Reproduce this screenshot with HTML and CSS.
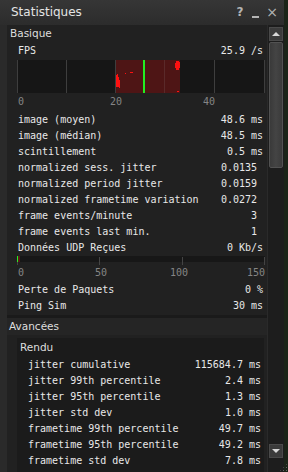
FILE: index.html
```html
<!DOCTYPE html>
<html>
<head>
<meta charset="utf-8">
<link rel="stylesheet" href="styles.css">
</head>
<body>
<div class="window">
  <div class="titlebar">
    <span class="title">Statistiques</span>
    <div class="ctrls">
      <span class="ctrl q">?</span>
      <span class="ctrl min"></span>
      <span class="ctrl close">×</span>
    </div>
  </div>
  <div class="main">
    <div class="content">
      <div class="section basic">
        <div class="sec-head">Basique</div>
        <div class="rows">
          <div class="row first"><span>FPS</span><span>25.9 /s</span></div>
        </div>
        <div class="graph">
          <svg width="248" height="33" viewBox="0 0 248 33">
            <rect x="0" y="0" width="248" height="33" fill="#161616"/>
            <rect x="98" y="0" width="65" height="33" fill="#4e1515"/>
            <g fill="#3e3e3e">
              <rect x="0" y="0" width="1" height="33"/>
              <rect x="49" y="0" width="1" height="33"/>
              <rect x="98" y="0" width="1" height="33"/>
              <rect x="147" y="0" width="1" height="33" fill="#5a2a2a"/>
              <rect x="197" y="0" width="1" height="33"/>
              <rect x="247" y="0" width="1" height="33"/>
            </g>
            <g fill="#ff1010">
              <rect x="99" y="15" width="2" height="12"/>
              <rect x="101" y="17" width="1" height="10"/>
              <rect x="102" y="20" width="1" height="8"/>
              <rect x="100" y="14" width="1" height="2"/>
              <rect x="108" y="13" width="1" height="1"/>
              <rect x="113" y="12" width="3" height="1"/>
              <rect x="159" y="1" width="3" height="9"/>
              <rect x="158" y="3" width="1" height="5"/>
              <rect x="162" y="2" width="1" height="6"/>
              <rect x="160" y="31" width="2" height="1"/>
            </g>
            <rect x="126" y="0" width="2" height="33" fill="#22ee22"/>
          </svg>
        </div>
        <div class="axis axis-fps">
          <span class="lbl" style="left:1px">0</span>
          <span class="lbl" style="left:93px">20</span>
          <span class="lbl" style="left:186px">40</span>
        </div>
        <div class="rows">
          <div class="row first"><span>image (moyen)</span><span>48.6 ms</span></div>
          <div class="row"><span>image (médian)</span><span>48.5 ms</span></div>
          <div class="row"><span>scintillement</span><span>0.5 ms</span></div>
          <div class="row"><span>normalized sess. jitter</span><span class="nu">0.0135</span></div>
          <div class="row"><span>normalized period jitter</span><span class="nu">0.0159</span></div>
          <div class="row"><span>normalized frametime variation</span><span class="nu">0.0272</span></div>
          <div class="row"><span>frame events/minute</span><span class="nu">3</span></div>
          <div class="row"><span>frame events last min.</span><span class="nu">1</span></div>
          <div class="row"><span>Données UDP Reçues</span><span>0 Kb/s</span></div>
        </div>
        <div class="bar">
          <svg width="248" height="9" viewBox="0 0 248 9">
            <rect x="0" y="0" width="248" height="6" fill="#171717"/>
            <g fill="#444">
              <rect x="0" y="1" width="1" height="8"/>
              <rect x="82" y="1" width="1" height="8"/>
              <rect x="165" y="1" width="1" height="8"/>
              <rect x="247" y="1" width="1" height="8"/>
            </g>
            <rect x="1" y="0" width="2" height="6" fill="#5a1818"/>
            <rect x="0" y="0" width="1" height="6" fill="#22ee22"/>
          </svg>
        </div>
        <div class="axis axis-udp">
          <span class="lbl" style="left:1px">0</span>
          <span class="lbl" style="left:78px">50</span>
          <span class="lbl" style="left:153px">100</span>
          <span class="lbl" style="left:230px">150</span>
        </div>
        <div class="rows">
          <div class="row first"><span>Perte de Paquets</span><span>0 %</span></div>
          <div class="row"><span>Ping Sim</span><span>30 ms</span></div>
        </div>
      </div>
      <div class="section adv">
        <div class="sec-head">Avancées</div>
        <div class="sub">
          <div class="sub-head">Rendu</div>
          <div class="rows subrows">
            <div class="row first"><span>jitter cumulative</span><span>115684.7 ms</span></div>
            <div class="row"><span>jitter 99th percentile</span><span>2.4 ms</span></div>
            <div class="row"><span>jitter 95th percentile</span><span>1.3 ms</span></div>
            <div class="row"><span>jitter std dev</span><span>1.0 ms</span></div>
            <div class="row"><span>frametime 99th percentile</span><span>49.7 ms</span></div>
            <div class="row"><span>frametime 95th percentile</span><span>49.2 ms</span></div>
            <div class="row"><span>frametime std dev</span><span>7.8 ms</span></div>
          </div>
        </div>
      </div>
    </div>
    <div class="scroll">
      <div class="sbtn up"><span class="tri-up"></span></div>
      <div class="thumb"></div>
      <div class="track"></div>
      <div class="sbtn down"><span class="tri-down"></span></div>
      <div class="track-end"></div>
    </div>
  </div>
  <div class="grip"></div>
</div>
</body>
</html>
```

FILE: styles.css
```css
html, body {
  margin: 0;
  padding: 0;
}
body {
  background: #1b2418;
  width: 288px;
  height: 472px;
  overflow: hidden;
  font-family: "DejaVu Sans Mono", monospace;
  font-size: 10px;
  color: #e8e8e8;
}
.window {
  position: relative;
  width: 284px;
  height: 472px;
  background: #2a2a2a;
  display: flex;
  flex-direction: column;
}
.titlebar {
  height: 25px;
  flex: none;
  display: flex;
  align-items: center;
  justify-content: space-between;
  background: linear-gradient(#363636, #2c2c2c);
  padding: 0 4px 0 11px;
}
.title {
  font-family: "DejaVu Sans", sans-serif;
  font-size: 12px;
  color: #e4e4e4;
  margin-top: -2px;
}
.ctrls {
  display: flex;
  align-items: center;
  gap: 0;
  margin-top: -2px;
}
.ctrl {
  font-family: "DejaVu Sans", sans-serif;
  color: #b4b4b4;
  width: 16px;
  text-align: center;
}
.q {
  font-weight: bold;
  font-size: 12px;
}
.min {
  height: 13px;
  position: relative;
}
.min::after {
  content: "";
  position: absolute;
  left: 4px;
  bottom: 0;
  width: 7px;
  height: 2px;
  background: #b4b4b4;
}
.close {
  font-size: 14px;
}
.main {
  flex: 1;
  display: flex;
  padding-left: 7px;
  min-height: 0;
}
.content {
  width: 260px;
  background: #212121;
  overflow: hidden;
}
.section.basic {
  padding-bottom: 1px;
  border-bottom: 3px solid #1a1a1a;
}
.sec-head {
  height: 16px;
  line-height: 16px;
  padding-left: 3px;
  font-family: "DejaVu Sans", sans-serif;
  font-size: 10.5px;
  color: #dedede;
}
.adv .sec-head {
  background: #252525;
  height: 17px;
  line-height: 17px;
  padding-left: 2px;
}
.rows {
  padding: 0 4px 0 11px;
}
.row {
  height: 16px;
  line-height: 16px;
  display: flex;
  justify-content: space-between;
  white-space: pre;
}
.row.first {
  margin-top: 2px;
}
.nu {
  padding-right: 6px;
}
.graph {
  margin: 1px 0 0 10px;
  height: 33px;
}
.graph svg, .bar svg {
  display: block;
}
.axis {
  position: relative;
  height: 16px;
  line-height: 16px;
  margin-left: 10px;
  color: #858585;
}
.axis-fps {
  margin-top: 1px;
}
.lbl {
  position: absolute;
  top: 0;
}
.bar {
  margin-left: 10px;
  height: 9px;
}
.axis-udp {
  height: 15px;
  margin-top: 0;
}
.sub {
  margin: 3px 3px 0 10px;
  background: #1b1b1b;
  height: 200px;
}
.sub-head {
  height: 16px;
  line-height: 16px;
  padding-left: 3px;
  padding-top: 1px;
  font-family: "DejaVu Sans", sans-serif;
  font-size: 10.5px;
  color: #dedede;
}
.subrows {
  padding: 0 3px 0 11px;
}
.scroll {
  width: 16px;
  margin-left: 1px;
  display: flex;
  flex-direction: column;
  background: #1d1d1d;
}
.sbtn {
  height: 12px;
  margin: 2px 1px 0 1px;
  background: #3b3b3b;
  border: 1px solid #4a4a4a;
  display: flex;
  align-items: center;
  justify-content: center;
  flex: none;
}
.sbtn.down {
  margin-top: 0;
}
.tri-up {
  width: 0;
  height: 0;
  border-left: 4px solid transparent;
  border-right: 4px solid transparent;
  border-bottom: 4px solid #d8d8d8;
}
.tri-down {
  width: 0;
  height: 0;
  border-left: 4px solid transparent;
  border-right: 4px solid transparent;
  border-top: 4px solid #d8d8d8;
}
.thumb {
  height: 124px;
  margin: 1px 1px 0 1px;
  background: linear-gradient(90deg, #3a3a3a, #444 50%, #3a3a3a);
  border: 1px solid #525252;
  border-radius: 2px;
  flex: none;
}
.track {
  flex: 1;
}
.track-end {
  height: 14px;
  flex: none;
}
.grip {
  position: absolute;
  right: -4px;
  bottom: 0;
  width: 9px;
  height: 9px;
  background-image: radial-gradient(#666 0.7px, transparent 0.8px);
  background-size: 3px 3px;
  clip-path: polygon(100% 0, 100% 100%, 0 100%);
}
```
